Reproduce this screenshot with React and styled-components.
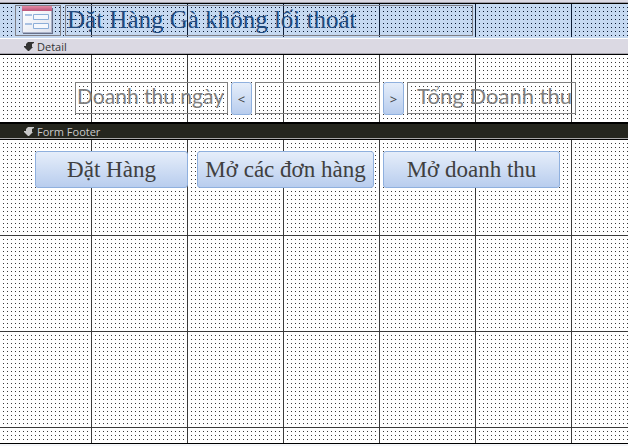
import React from "react";
import styled, { createGlobalStyle, css } from "styled-components";

const GlobalStyle = createGlobalStyle`
  *, *::before, *::after { box-sizing: border-box; }
  body {
    margin: 0;
    background: #f4f6f9;
    font-family: "Open Sans", "Noto Sans", sans-serif;
  }
`;

/* Design grid: a dot every 4px and a ruled line every 96px. */
const designGrid = css`
  background-color: ${(p) => p.$fill};
  background-image:
    linear-gradient(to right, transparent 95px, ${(p) => p.$ink} 95px),
    linear-gradient(to bottom, transparent 95px, ${(p) => p.$ink} 95px),
    conic-gradient(from 90deg at 3px 3px, ${(p) => p.$ink} 90deg, transparent 0);
  background-size: 96px 96px, 96px 96px, 4px 4px;
  background-position: -4px 0, 0 0, 0 0;
`;

const Designer = styled.main`
  display: flex;
  flex-direction: column;
  border-top: 2px solid #dbd9e3;
`;

const Surface = styled.section`
  ${designGrid}
  display: flex;
  align-items: flex-start;
  overflow: hidden;
`;

const HeaderSurface = styled(Surface)`
  gap: 4px;
  min-height: 35px;
  padding: 1px 0 1px 15px;
  background-clip: padding-box;
  border-top: 1px solid #000;
  border-bottom: 1px solid #c6d9f1;
`;

const HeaderEdge = styled.div`
  height: 1px;
  background: #a09ea8;
`;

const DetailSurface = styled(Surface)`
  min-height: 67px;
  padding: 27px 0 7px 75px;
`;

const FooterSurface = styled(Surface)`
  gap: 9px;
  min-height: 304px;
  padding: 11px 0 0 35px;
  border-bottom: 1px solid #000;
`;

const SectionBar = styled.header`
  display: flex;
  align-items: center;
  gap: 3px;
  height: ${(p) => (p.$selected ? 18 : 17)}px;
  padding: 0 24px;
  color: ${(p) => (p.$selected ? "#c9c9c9" : "#333")};
  background: ${(p) => (p.$selected ? "#25261e" : "#dbd9e3")};
  border-top: ${(p) => (p.$selected ? "2px solid #000" : "1px solid #fff")};
  border-bottom: 1px solid #000;
  box-shadow: inset 0 -1px 0 ${(p) => (p.$selected ? "#a8a8a8" : "#aaa8b2")};
`;

const SectionName = styled.h2`
  margin: 0;
  font-size: 11px;
  font-weight: 400;
  line-height: 14px;
`;

const IconFrame = styled.div`
  display: flex;
  justify-content: center;
  width: 46px;
  height: 31px;
  border: 1px solid #7f7f86;
`;

const Title = styled.h1`
  width: 408px;
  height: 31px;
  margin: 0;
  padding: 0 1px;
  border: 1px solid #7f7f86;
  color: #1f497d;
  font: 400 25px/28px "Liberation Serif", serif;
  white-space: nowrap;
`;

const ControlRow = styled.div`
  display: flex;
  gap: 3px;
`;

const FieldLabel = styled.label`
  width: ${(p) => p.$width}px;
  height: 32px;
  border: 1px solid #7f7f7f;
  color: #7f7f7f;
  font: 400 ${(p) => p.$size}px/26px Lato, "Noto Sans", sans-serif;
  text-align: ${(p) => p.$align || "left"};
  padding: 0 3px 0 1px;
  white-space: nowrap;
`;

const DateInput = styled.input`
  width: 125px;
  height: 32px;
  padding: 0 4px;
  border: 1px solid #7f7f7f;
  border-radius: 0;
  background: transparent;
  color: #404040;
  font: 400 21px/26px Lato, "Noto Sans", sans-serif;
`;

const FormButton = styled.button`
  width: ${(p) => p.$width}px;
  height: 37px;
  padding: 0;
  border: 1px solid #8fb0de;
  border-radius: 3px;
  background: linear-gradient(#e6eefa, #b8cdee);
  color: #404040;
  font: 400 23px/32px "Liberation Serif", serif;
  white-space: nowrap;
`;

const StepButton = styled(FormButton)`
  height: 33px;
  font: 400 13px/16px "Open Sans", "Noto Sans", sans-serif;
`;

function SectionArrow() {
  return (
    <svg width="10" height="9" viewBox="0 0 10 9" fill="currentColor" aria-hidden="true">
      <path d="M4 0H10V1L8 2V5H9L5 9H4L0 5V4H2V2Z" />
    </svg>
  );
}

function FormIcon() {
  return (
    <svg width="32" height="29" viewBox="0 0 32 29" aria-hidden="true">
      <defs>
        <linearGradient id="page" x1="0" y1="0" x2="1" y2="1">
          <stop offset="0" stopColor="#fff" />
          <stop offset="1" stopColor="#dfe3ee" />
        </linearGradient>
        <linearGradient id="caption" x1="0" y1="0" x2="0" y2="1">
          <stop offset="0" stopColor="#e58aa5" />
          <stop offset="1" stopColor="#bb5478" />
        </linearGradient>
      </defs>
      <path d="M1 2H31V28H1Z" fill="#68718b" />
      <path d="M0 0H30V27H0Z" fill="#aab2c8" />
      <path d="M1 5H29V26H1Z" fill="url(#page)" />
      <path d="M0 0H30V5H0Z" fill="url(#caption)" />
      <path d="M3 8H10V10H3ZM3 17H10V19H3Z" fill="#a9c1e2" />
      <path d="M11.500 8.500H26.500V13.500H11.500ZM11.500 17.500H26.500V22.500H11.500Z" fill="#f5f8fd" stroke="#8caed8" />
    </svg>
  );
}

export default function App() {
  return (
    <>
      <GlobalStyle />
      <Designer>
        <HeaderEdge />
        <HeaderSurface $fill="#c6d9f1" $ink="#0b1a33">
          <IconFrame>
            <FormIcon />
          </IconFrame>
          <Title>Đặt Hàng Gà không lối thoát</Title>
        </HeaderSurface>

        <SectionBar>
          <SectionArrow />
          <SectionName>Detail</SectionName>
        </SectionBar>
        <DetailSurface $fill="#fff" $ink="#3a3a3a">
          <ControlRow>
            <FieldLabel htmlFor="revenue-date" $width={153} $size={21}>Doanh thu ngày</FieldLabel>
            <StepButton type="button" $width={21}>&lt;</StepButton>
            <DateInput id="revenue-date" type="text" />
            <StepButton type="button" $width={21}>&gt;</StepButton>
            <FieldLabel as="span" $width={169} $size={22} $align="right">Tổng Doanh thu</FieldLabel>
          </ControlRow>
        </DetailSurface>

        <SectionBar $selected>
          <SectionArrow />
          <SectionName>Form Footer</SectionName>
        </SectionBar>
        <FooterSurface $fill="#fff" $ink="#3a3a3a">
          <FormButton type="button" $width={153}>Đặt Hàng</FormButton>
          <FormButton type="button" $width={177}>Mở các đơn hàng</FormButton>
          <FormButton type="button" $width={177}>Mở doanh thu</FormButton>
        </FooterSurface>
      </Designer>
    </>
  );
}
